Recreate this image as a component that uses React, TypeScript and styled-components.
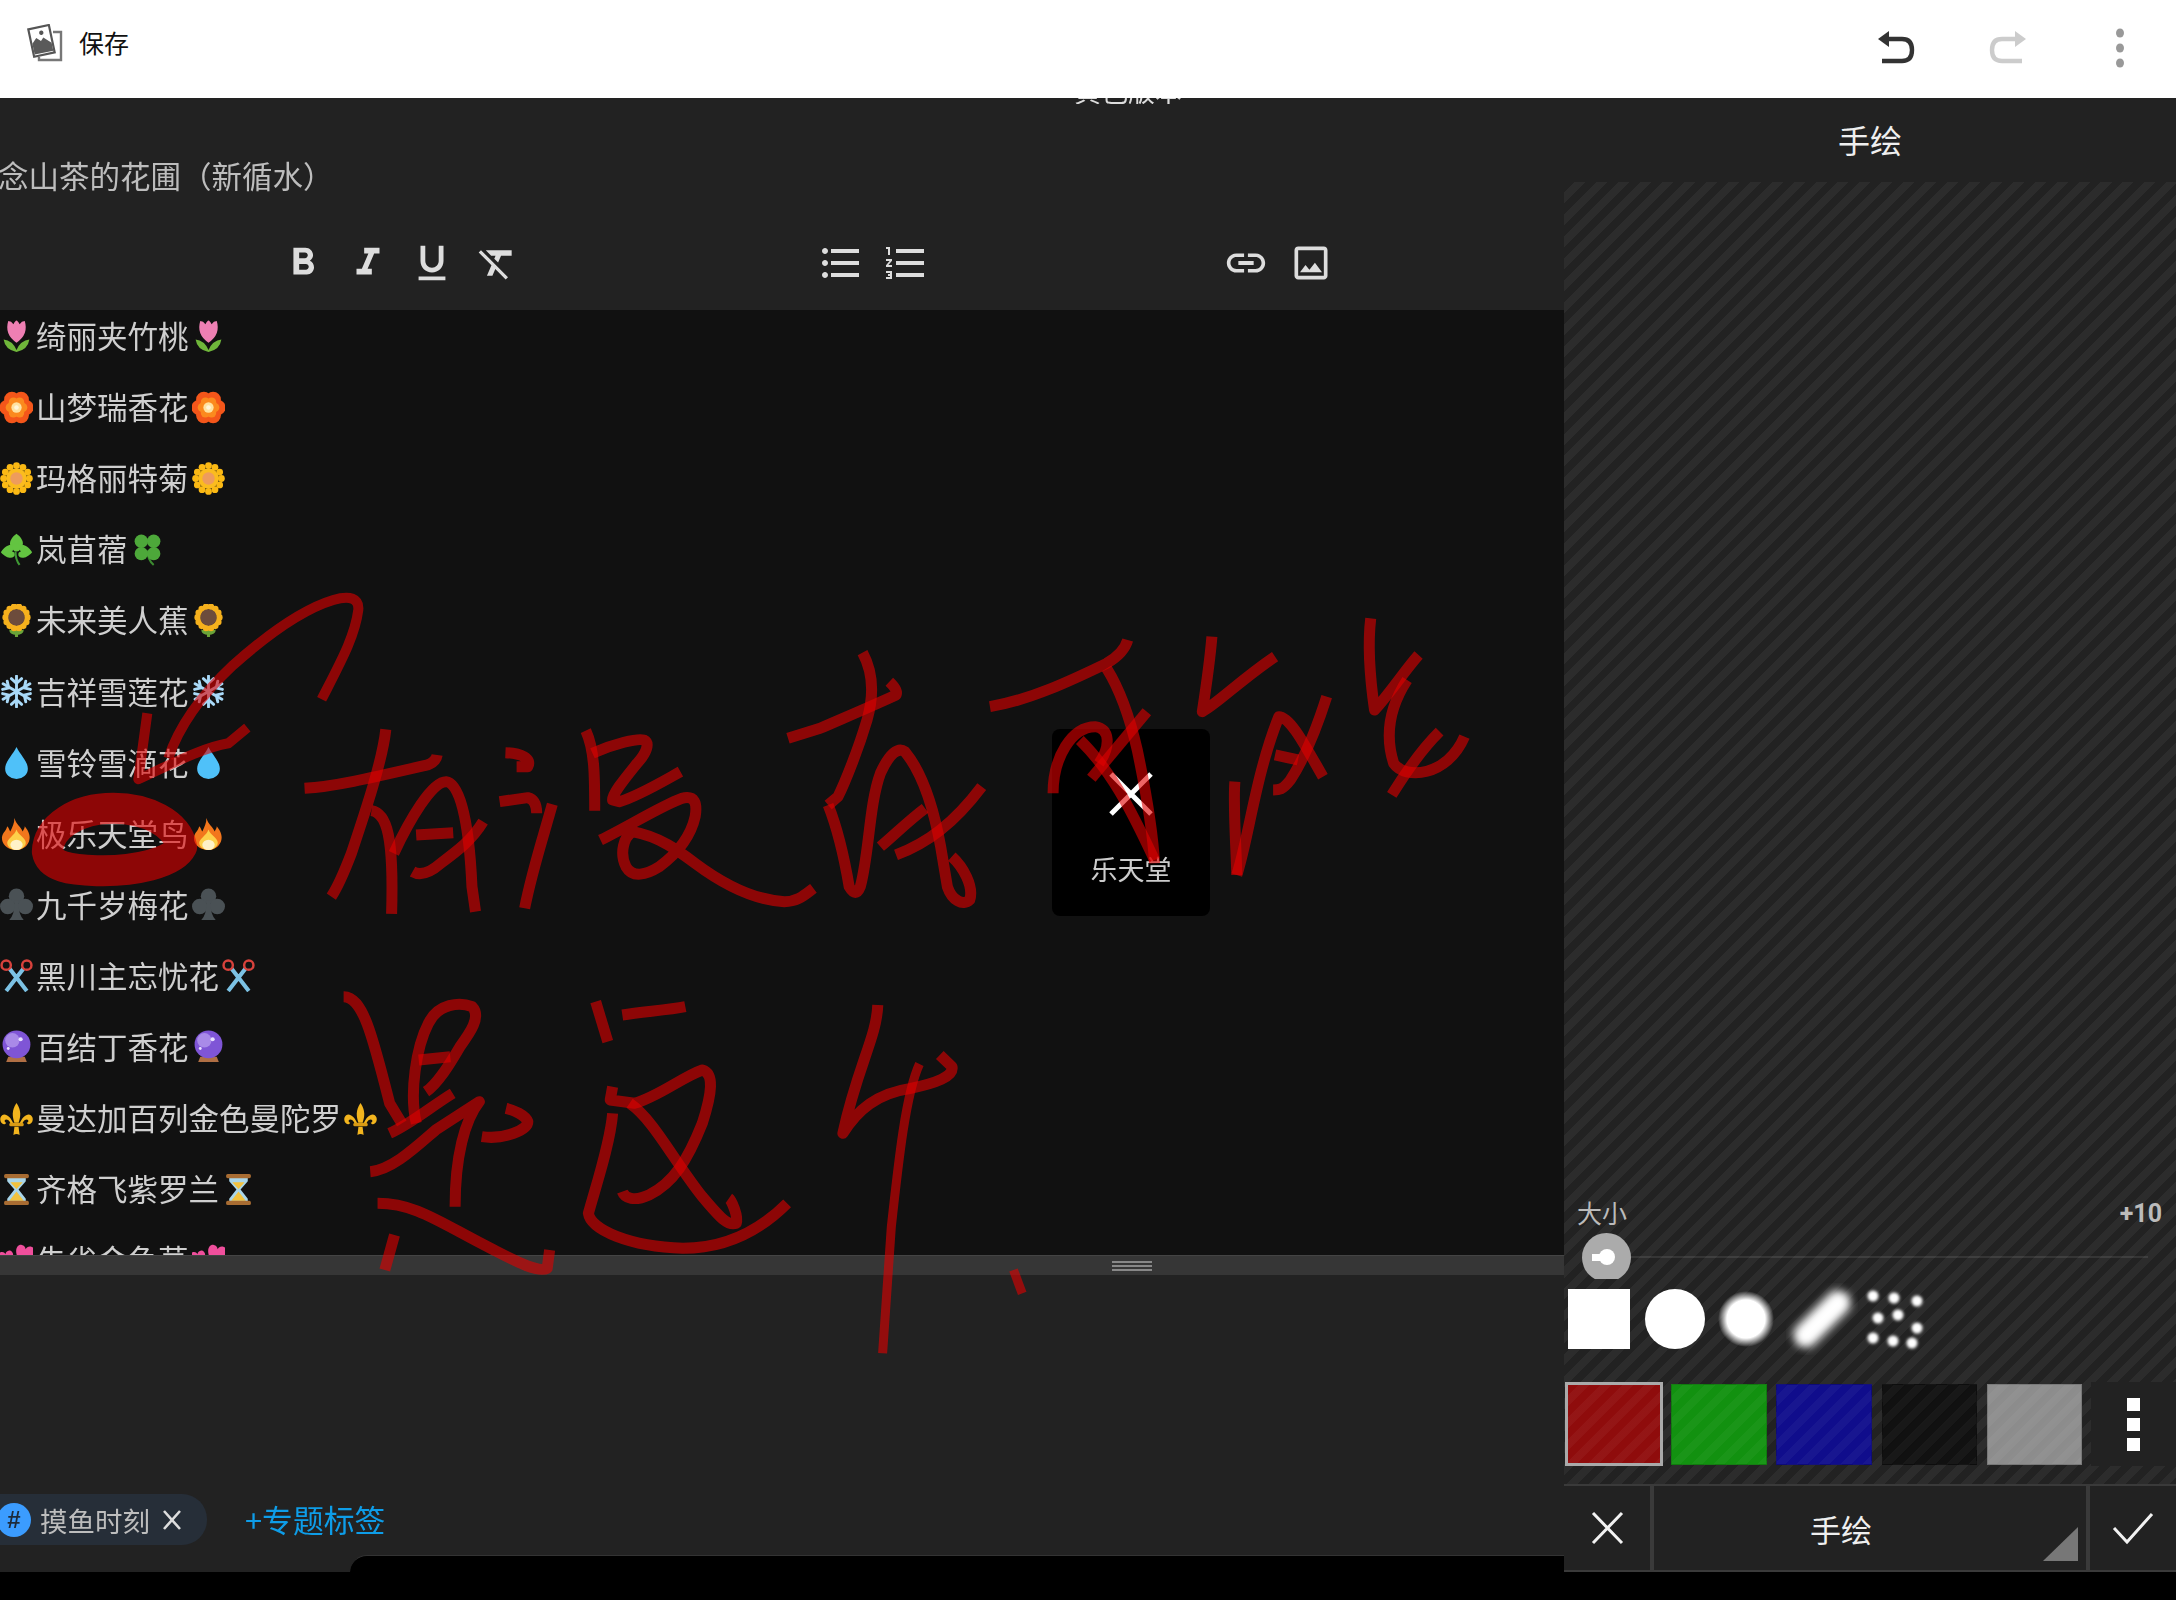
import React from "react";
import styled, { createGlobalStyle } from "styled-components";
import {
  MdFormatBold,
  MdFormatItalic,
  MdFormatUnderlined,
  MdFormatClear,
  MdFormatListBulleted,
  MdFormatListNumbered,
  MdLink,
  MdOutlineImage,
} from "react-icons/md";

const CJK = `"Noto Sans CJK SC", "Noto Sans", sans-serif`;

const Global = createGlobalStyle`
  html, body { margin: 0; padding: 0; background: #000; }
  body { font-family: ${CJK}; }
`;

const Page = styled.div`
  position: relative;
  width: 2176px;
  height: 1600px;
  overflow: hidden;
  background: #000;
  display: flex;
  flex-direction: column;
`;

/* ---------- top white bar ---------- */
const TopBar = styled.header`
  height: 98px;
  flex: none;
  background: #fff;
  display: flex;
  align-items: center;
  justify-content: space-between;
`;
const SaveAction = styled.div`
  display: flex;
  align-items: center;
  gap: 16px;
  padding-left: 27px;
  margin-top: -12px;
`;
const SaveLabel = styled.span`
  font-size: 25px;
  line-height: 34px;
  color: #111;
  margin-top: -2px;
`;
const TopActions = styled.div`
  display: flex;
  margin-top: -2px;
`;
const TopAction = styled.div`
  width: 112px;
  height: 60px;
  display: flex;
  align-items: center;
  justify-content: center;
`;

/* ---------- main split ---------- */
const Main = styled.div`
  height: 1474px;
  flex: none;
  display: flex;
`;
const LeftColumn = styled.section`
  width: 1564px;
  flex: none;
  display: flex;
  flex-direction: column;
`;
const ClippedHeading = styled.div`
  height: 6px;
  flex: none;
  box-sizing: border-box;
  background: #222;
  overflow: hidden;
  display: flex;
  align-items: flex-end;
  justify-content: center;
  padding-left: 692px;
  font-size: 27px;
  line-height: 27px;
  color: #ddd;
  filter: blur(0.6px);
`;
const HeaderBlock = styled.div`
  height: 206px;
  flex: none;
  background: #222;
  display: flex;
  flex-direction: column;
`;
const PostTitle = styled.div`
  margin: 48.5px 0 0 -2px;
  height: 44px;
  font-size: 30.5px;
  line-height: 44px;
  color: #bdbdbd;
  white-space: nowrap;
  filter: blur(0.5px);
`;
const Toolbar = styled.div`
  display: flex;
  align-items: center;
  height: 60px;
  margin-top: 36.5px;
  padding-left: 271px;
  color: #ddd;
  filter: blur(0.5px);
`;
const ToolGroup = styled.div<{ $offset: number; $gap?: number }>`
  display: flex;
  gap: ${(p) => p.$gap ?? 0}px;
  margin-left: ${(p) => p.$offset}px;
`;
const ToolButton = styled.div`
  width: 64.5px;
  height: 60px;
  display: flex;
  align-items: center;
  justify-content: center;
`;
const Editor = styled.div`
  height: 945px;
  flex: none;
  background: #111;
  overflow: hidden;
`;
const FlowerList = styled.div`
  margin-top: -9.5px;
  filter: blur(0.55px);
`;
const FlowerRow = styled.div`
  height: 71.1px;
  display: flex;
  align-items: center;
  gap: 3px;
  font-size: 30.5px;
  line-height: 40px;
  color: #cfcfcf;
`;
const FlowerName = styled.span`
  margin-top: -2px;
`;
const EmojiSvg = styled.svg`
  width: 33px;
  height: 33px;
  flex: none;
`;
const Splitter = styled.div`
  height: 19px;
  flex: none;
  box-sizing: content-box;
  background: #363636;
  border-top: 1px solid #444;
  display: flex;
  align-items: center;
  justify-content: center;
  padding-left: 700px;
`;
const Grip = styled.div`
  width: 40px;
  height: 10px;
  border-top: 2px solid #888;
  border-bottom: 2px solid #888;
  box-sizing: border-box;
  &::after {
    content: "";
    display: block;
    height: 2px;
    margin-top: 2px;
    background: #888;
  }
`;
const Compose = styled.div`
  height: 280px;
  flex: none;
  background: #222;
  box-sizing: border-box;
  display: flex;
  align-items: flex-end;
  gap: 38px;
  padding-bottom: 10px;
`;
const TagChip = styled.div`
  width: 207px;
  height: 51px;
  box-sizing: border-box;
  border-radius: 0 25px 25px 0;
  background: #262e38;
  display: flex;
  align-items: center;
  filter: blur(0.4px);
`;
const HashBadge = styled.span`
  width: 34px;
  height: 34px;
  margin-left: -3px;
  flex: none;
  border-radius: 50%;
  background: #3b9cff;
  color: #1d2a3a;
  font: 700 24px/34px "Liberation Sans", sans-serif;
  text-align: center;
`;
const TagText = styled.span`
  margin-left: 9px;
  font-size: 27.5px;
  line-height: 36px;
  color: #bdbdbd;
  white-space: nowrap;
`;
const TagClose = styled.svg`
  margin-left: 10px;
  width: 24px;
  height: 24px;
  flex: none;
`;
const AddTag = styled.span`
  font-size: 30.8px;
  line-height: 53px;
  color: #0e9de8;
  white-space: nowrap;
  filter: blur(0.4px);
`;
const LeftFooter = styled.div`
  height: 17px;
  flex: none;
  background: #222;
  display: flex;
  justify-content: flex-end;
`;
const FooterNotch = styled.div`
  width: 1214px;
  background: #000;
  border-top: 1px solid #333;
  border-top-left-radius: 28px;
`;

/* ---------- right panel ---------- */
const RightColumn = styled.aside`
  width: 612px;
  flex: none;
  display: flex;
  flex-direction: column;
  background: #222;
`;
const PanelTitle = styled.div`
  height: 84px;
  flex: none;
  box-sizing: border-box;
  display: flex;
  align-items: center;
  justify-content: center;
  font-size: 32px;
  color: #efefef;
  padding-bottom: 3px;
`;
const Canvas = styled.div`
  flex: 1;
  display: flex;
  flex-direction: column;
  justify-content: flex-end;
  padding-bottom: 18px;
  background: repeating-linear-gradient(
    135deg,
    #222 0,
    #222 7.7px,
    #2c2c2c 7.7px,
    #2c2c2c 15.5px
  );
`;
const SizeRow = styled.div`
  display: flex;
  justify-content: space-between;
  align-items: center;
  height: 36px;
  padding: 0 14px 0 13px;
  color: #bbb;
`;
const SizeLabel = styled.span`
  font-size: 25px;
  line-height: 36px;
`;
const SizeValue = styled.span`
  margin-top: 3px;
  font: 700 25px/36px Roboto, "Liberation Sans", sans-serif;
`;
const SliderRow = styled.div`
  position: relative;
  height: 46px;
  margin-top: 3px;
`;
const SliderTrack = styled.div`
  position: absolute;
  left: 38px;
  width: 546px;
  top: 23px;
  height: 2px;
  background: rgba(255, 255, 255, 0.09);
`;
const SliderThumb = styled.div`
  position: absolute;
  left: 18px;
  top: 0;
  width: 49px;
  height: 46px;
  overflow: hidden;
`;
const ThumbDisc = styled.div`
  width: 49px;
  height: 49px;
  border-radius: 50%;
  background: #ababab;
  position: relative;
`;
const ThumbDot = styled.div`
  position: absolute;
  left: 17px;
  top: 16px;
  width: 16px;
  height: 16px;
  border-radius: 50%;
  background: #fff;
  &::before {
    content: "";
    position: absolute;
    left: -7px;
    top: 5px;
    width: 10px;
    height: 7px;
    background: #fff;
  }
`;
const BrushRow = styled.div`
  display: flex;
  align-items: center;
  height: 60px;
  margin-top: 10px;
  padding-left: 4px;
`;
const SquareBrush = styled.div`
  width: 62px;
  height: 60px;
  background: #fff;
`;
const RoundBrush = styled.div`
  width: 60px;
  height: 60px;
  margin-left: 15px;
  border-radius: 50%;
  background: #fff;
`;
const SoftBrush = styled.div`
  width: 56px;
  height: 56px;
  margin-left: 13px;
  border-radius: 50%;
  background: radial-gradient(circle closest-side, #fff 0, #fff 68%, rgba(255, 255, 255, 0) 100%);
`;
const BrushSvg = styled.svg`
  flex: none;
  width: 72px;
  height: 72px;
  margin-left: 12px;
`;
const DotsSvg = styled.svg`
  flex: none;
  width: 62px;
  height: 66px;
  margin-left: 7px;
`;
const SwatchRow = styled.div`
  display: flex;
  align-items: stretch;
  height: 84px;
  margin-top: 33px;
  padding-left: 1px;
`;
const Swatch = styled.div<{ $color: string; $selected?: boolean }>`
  width: ${(p) => (p.$selected ? 98 : 95.5)}px;
  margin-right: ${(p) => (p.$selected ? 8 : 9.8)}px;
  margin-top: ${(p) => (p.$selected ? 0 : 2)}px;
  margin-bottom: ${(p) => (p.$selected ? 0 : 1)}px;
  box-sizing: border-box;
  border: ${(p) => (p.$selected ? "3px solid #aaa" : "1px solid rgba(0,0,0,.15)")};
  background:
    repeating-linear-gradient(
      135deg,
      rgba(255, 255, 255, 0) 0,
      rgba(255, 255, 255, 0) 7.7px,
      rgba(255, 255, 255, 0.035) 7.7px,
      rgba(255, 255, 255, 0.035) 15.5px
    ),
    ${(p) => p.$color};
`;
const MoreSwatch = styled.div`
  flex: 1;
  margin-left: -1px;
  background: #222;
  display: flex;
  flex-direction: column;
  align-items: center;
  justify-content: center;
  gap: 7px;
`;
const MoreDot = styled.div`
  width: 13px;
  height: 13px;
  background: #fff;
`;
const ActionBar = styled.div`
  height: 88px;
  flex: none;
  box-sizing: border-box;
  display: flex;
  align-items: stretch;
  background: #222;
  border-top: 2px solid #3a3a3a;
  border-bottom: 2px solid #3a3a3a;
`;
const BarButton = styled.div`
  width: 86px;
  flex: none;
  display: flex;
  align-items: center;
  justify-content: center;
`;
const BarCenter = styled.div`
  flex: 1;
  position: relative;
  display: flex;
  align-items: center;
  justify-content: center;
  padding-right: 58px;
  border-left: 4px solid #3a3a3a;
  border-right: 4px solid #3a3a3a;
  font-size: 31px;
  color: #efefef;
`;
const Corner = styled.div`
  position: absolute;
  right: 8px;
  bottom: 9px;
  width: 35px;
  height: 34px;
  background: #777;
  clip-path: polygon(100% 0, 100% 100%, 0 100%);
`;

/* ---------- overlays ---------- */
const Toast = styled.div`
  position: absolute;
  left: 1052px;
  top: 729px;
  width: 158px;
  height: 187px;
  box-sizing: border-box;
  border-radius: 8px;
  background: #000;
  display: flex;
  flex-direction: column;
  align-items: center;
  padding-top: 42px;
`;
const ToastText = styled.div`
  margin-top: 34px;
  font-size: 27px;
  line-height: 36px;
  color: #ccc;
  filter: blur(0.4px);
`;
const InkLayer = styled.svg`
  position: absolute;
  left: 0;
  top: 0;
  width: 1564px;
  height: 1400px;
  pointer-events: none;
`;
const Ink = styled.path<{ $w?: number }>`
  fill: none;
  stroke: rgb(225, 0, 0);
  stroke-opacity: 0.6;
  stroke-width: ${(p) => p.$w ?? 10}px;
  stroke-linecap: butt;
  stroke-linejoin: round;
  vector-effect: non-scaling-stroke;
`;

/* ---------- data ---------- */
type EmojiName =
  | "tulip" | "blossom" | "daisy" | "shamrock" | "clover" | "sunflower" | "snow"
  | "drop" | "fire" | "club" | "scissors" | "ball" | "lis" | "glass" | "hearts";

const ring = (n: number, r: number, size: number, fill: string, cx = 16, cy = 16) =>
  Array.from({ length: n }, (_, i) => {
    const a = (i / n) * Math.PI * 2;
    return <circle key={i} cx={cx + Math.cos(a) * r} cy={cy + Math.sin(a) * r} r={size} fill={fill} />;
  });

const heart = (x: number, y: number, s: number, fill: string, rot = 0) => (
  <path
    transform={`translate(${x} ${y}) rotate(${rot}) scale(${s})`}
    d="M0 6 C-7 1 -6 -5 -2.6 -5 C-1.2 -5 -.4 -4.2 0 -3 C.4 -4.2 1.2 -5 2.6 -5 C6 -5 7 1 0 6Z"
    fill={fill}
  />
);

const emojiArt: Record<EmojiName, React.ReactNode> = {
  tulip: (
    <>
      <path d="M16 31 Q5 29 3.5 19 Q12 20 16 29 Q20 20 28.5 19 Q27 29 16 31Z" fill="#6fb63a" />
      <path d="M8 1 Q11 1 13 4 Q15 .5 16 .5 Q17 .5 19 4 Q21 1 24 1 Q28 14 16 22 Q4 14 8 1Z" fill="#ee7fb3" />
    </>
  ),
  blossom: (
    <>
      {ring(6, 9, 7.5, "#f4561a")}
      {ring(6, 6, 4.5, "#fb8a1e")}
      <circle cx="16" cy="16" r="5" fill="#ffe2a0" />
      <circle cx="16" cy="16" r="2.2" fill="#fff6da" />
    </>
  ),
  daisy: (
    <>
      {ring(12, 12.5, 3.3, "#fbb914")}
      <circle cx="16" cy="16" r="10" fill="#fbbc1e" />
      <circle cx="16" cy="16" r="6" fill="#ee9c5c" />
    </>
  ),
  shamrock: (
    <>
      <path d="M15 18 Q15 26 19 31" stroke="#3f9a35" strokeWidth="2" fill="none" />
      {heart(16, 8, 1.2, "#63c441", 180)}
      {heart(8, 18, 1.2, "#63c441", 85)}
      {heart(24, 18, 1.2, "#63c441", -85)}
      <circle cx="16" cy="14" r="4" fill="#63c441" />
    </>
  ),
  clover: (
    <>
      <path d="M16 17 Q16 26 22 31" stroke="#3c8a30" strokeWidth="2" fill="none" />
      <circle cx="10" cy="8" r="6.5" fill="#4da83a" />
      <circle cx="22" cy="8" r="6.5" fill="#4da83a" />
      <circle cx="10" cy="20" r="6.5" fill="#4da83a" />
      <circle cx="22" cy="20" r="6.5" fill="#4da83a" />
    </>
  ),
  sunflower: (
    <>
      <path d="M16 24 V32" stroke="#6aa338" strokeWidth="3" />
      <path d="M16 30 Q9 30 9 25 Q14 25 16 28 Q18 25 23 25 Q23 30 16 30Z" fill="#6aa338" />
      {ring(14, 10.5, 3.2, "#f6b11d", 16, 13)}
      <circle cx="16" cy="13" r="8" fill="#6d4c3c" />
    </>
  ),
  snow: (
    <g stroke="#a9d9f8" strokeWidth="2.8" fill="none" strokeLinecap="round">
      <path d="M16 1 V31 M3 8.5 L29 23.5 M3 23.5 L29 8.5" />
      <path d="M11 3.5 L16 8 L21 3.5 M11 28.5 L16 24 L21 28.5 M2.5 14 L8.5 12.5 L7 6 M29.5 14 L23.5 12.5 L25 6 M2.5 18 L8.5 19.5 L7 26 M29.5 18 L23.5 19.5 L25 26" />
    </g>
  ),
  drop: <path d="M16 1 C20 9 27 15 27 22 A11 10 0 0 1 5 22 C5 15 12 9 16 1Z" fill="#4fc1f9" />,
  fire: (
    <>
      <path d="M14 1 C16 8 20 9 22 14 C23 12 24 11 24 9 C28 14 30 19 28 24 C26 29 21 32 16 32 C9 32 3 28 2 22 C1 16 6 14 7 9 C9 11 9 13 10 14 C12 10 14 6 14 1Z" fill="#f2761c" />
      <path d="M16 12 C18 18 25 20 25 25 C25 29 20 32 16 32 C11 32 7 29 7 25 C7 21 14 18 16 12Z" fill="#fdd04a" />
      <ellipse cx="16" cy="27" rx="6" ry="5" fill="#fff2c8" />
    </>
  ),
  club: (
    <>
      <circle cx="16" cy="8" r="7.5" fill="#4a5155" />
      <circle cx="7.5" cy="18" r="7.5" fill="#4a5155" />
      <circle cx="24.5" cy="18" r="7.5" fill="#4a5155" />
      <path d="M14.5 12 H17.5 Q18 26 23 31 H9 Q14 26 14.5 12Z" fill="#4a5155" />
    </>
  ),
  scissors: (
    <>
      <path d="M9 9 L26 31 M23 9 L6 31" stroke="#7cc2e4" strokeWidth="4" fill="none" />
      <circle cx="6" cy="6" r="4.5" fill="none" stroke="#d8423c" strokeWidth="2.4" />
      <circle cx="26" cy="6" r="4.5" fill="none" stroke="#d8423c" strokeWidth="2.4" />
    </>
  ),
  ball: (
    <>
      <path d="M8 26 H24 L26 31 H6Z" fill="#b06f44" />
      <circle cx="16" cy="14" r="13.5" fill="#7f55d6" />
      <circle cx="12" cy="10" r="7" fill="#a98ae8" />
      <circle cx="20" cy="9" r="2" fill="#e8e0ff" />
      <circle cx="8" cy="18" r="1.4" fill="#e8e0ff" />
    </>
  ),
  lis: (
    <>
      <path d="M16 1 C21 8 20 15 18 20 H14 C12 15 11 8 16 1Z" fill="#f3b51e" />
      <path d="M13 21 C10 13 3 9 0.5 15 C-1 20 4 24 6 20 C4 20 4 17 6 17 C9 17 10 20 11 23Z" fill="#f3b51e" />
      <path d="M19 21 C22 13 29 9 31.5 15 C33 20 28 24 26 20 C28 20 28 17 26 17 C23 17 22 20 21 23Z" fill="#f3b51e" />
      <rect x="9" y="20" width="14" height="3.5" rx="1.5" fill="#d89a14" />
      <path d="M14 24 H18 L19 32 Q16 30 13 32Z" fill="#f3b51e" />
    </>
  ),
  glass: (
    <>
      <path d="M7 4 H25 V8 L18 16 L25 25 V28 H7 V25 L14 16 L7 8Z" fill="#a9d6ea" />
      <path d="M10 9 H22 L16 15.5Z M16 18 L23 27 H9Z" fill="#f2c23e" />
      <rect x="4" y="1" width="24" height="4" rx="1.5" fill="#a86c32" />
      <rect x="4" y="27" width="24" height="4" rx="1.5" fill="#a86c32" />
    </>
  ),
  hearts: (
    <>
      {heart(6, 14, 1.4, "#ef4f9c", -10)}
      {heart(24, 10, 1.7, "#ef4f9c", 10)}
    </>
  ),
};

const Emoji = ({ name }: { name: EmojiName }) => (
  <EmojiSvg viewBox="0 0 32 32">{emojiArt[name]}</EmojiSvg>
);

const flowers: { l: EmojiName; r?: EmojiName; t: string }[] = [
  { l: "tulip", t: "绮丽夹竹桃" },
  { l: "blossom", t: "山梦瑞香花" },
  { l: "daisy", t: "玛格丽特菊" },
  { l: "shamrock", r: "clover", t: "岚苜蓿" },
  { l: "sunflower", t: "未来美人蕉" },
  { l: "snow", t: "吉祥雪莲花" },
  { l: "drop", t: "雪铃雪滴花" },
  { l: "fire", t: "极乐天堂鸟" },
  { l: "club", t: "九千岁梅花" },
  { l: "scissors", t: "黑川主忘忧花" },
  { l: "ball", t: "百结丁香花" },
  { l: "lis", t: "曼达加百列金色曼陀罗" },
  { l: "glass", t: "齐格飞紫罗兰" },
  { l: "hearts", t: "朱雀金鱼草" },
];

const inkGroups: { t: string; w?: number; p: string[] }[] = [
  {
    t: "translate(0 300) scale(.3333)",
    w: 10,
    p: [
      "M505 1375 C540 1270 620 1170 700 1095 C790 1015 900 930 1000 900 C1050 885 1078 895 1075 930 C1065 1010 1020 1090 965 1198",
      "M442 1240 L415 1438 C500 1400 600 1345 685 1330 L742 1283",
    ],
  },
  {
    t: "translate(0 780) scale(.3333)",
    w: 31,
    p: ["M142 215 C145 140 230 85 340 85 C440 85 530 130 545 200 C520 250 400 275 290 272 C210 270 150 260 142 215 Z"],
  },
  {
    t: "translate(280 570) scale(.4464 .3333)",
    w: 11,
    p: [
      "M55 655 C120 650 200 625 330 585 Q350 575 352 555",
      "M237 478 C230 570 190 730 160 850 C140 920 130 950 115 980",
      "M205 722 C240 730 255 800 250 1032",
      "M255 850 C290 750 340 635 372 635 C410 640 425 800 430 950 L438 1025",
      "M305 795 L388 788",
      "M455 755 C430 810 400 840 360 880 C330 915 310 915 297 905",
      "M505 548 C540 550 565 565 555 590 L530 590",
      "M492 695 L555 683 Q575 690 575 730",
      "M610 703 C590 800 565 900 548 1015",
      "M685 482 C705 540 705 620 705 722",
      "M700 550 C750 520 800 505 815 510 C830 520 820 550 800 580 C770 630 745 670 745 690 L760 695 C800 680 850 640 897 605",
      "M718 810 C780 770 850 710 900 685 C930 675 935 700 930 740 C920 800 890 850 850 890 C820 915 790 925 775 890 C760 850 770 800 790 785 C850 800 890 840 930 880 C990 940 1060 990 1130 995 C1160 995 1175 975 1195 955",
      "M1138 505 L1210 475 C1270 440 1340 400 1380 375 Q1385 360 1365 335",
      "M1305 248 C1330 310 1330 380 1315 450 C1295 540 1265 640 1250 680 L1228 705",
      "M1228 705 C1250 780 1265 870 1275 950 Q1290 985 1300 950 C1320 850 1320 700 1345 610 C1365 550 1385 530 1400 545 C1440 610 1465 720 1480 830 L1495 950 C1505 990 1530 1010 1545 990 C1555 950 1530 890 1505 860",
      "M1345 830 C1380 790 1410 750 1445 715",
      "M1380 855 C1450 820 1510 760 1572 650",
    ],
  },
  {
    t: "translate(900 600) scale(.3827 .3333)",
    w: 11,
    p: [
      "M235 320 C340 300 450 240 540 190 Q585 160 595 120",
      "M540 205 C570 260 600 350 620 450 C640 560 660 680 665 790",
      "M470 420 C550 510 600 620 665 780",
      "M400 580 C400 470 450 380 510 380 C550 385 550 440 520 490",
      "M500 535 L645 335",
      "M815 110 C810 180 800 260 790 335 C830 310 890 240 980 170",
      "M875 545 C870 620 880 780 880 825",
      "M880 825 C910 720 930 520 990 350 C1020 350 1060 440 1105 530",
      "M1115 290 C1090 380 1060 470 1020 540 C1000 570 990 570 975 570",
      "M980 465 L1040 480",
      "M1230 55 C1220 150 1230 250 1240 330 C1280 280 1320 210 1355 165",
      "M1325 240 C1280 320 1265 400 1290 490 C1320 540 1430 530 1475 410",
      "M1410 395 C1370 440 1320 520 1285 585",
    ],
  },
  {
    t: "translate(300 960) scale(.4847 .3333)",
    w: 11,
    p: [
      "M90 110 C130 110 150 230 185 430 L210 490",
      "M240 490 C225 400 240 260 265 190 C285 130 330 125 355 140 C375 170 350 220 330 260 C310 310 285 370 260 395",
      "M245 300 L310 290",
      "M185 520 C230 490 270 440 315 400",
      "M145 635 C190 630 240 560 280 510 L370 425 C340 480 320 590 320 740",
      "M375 530 C420 540 470 510 470 485 C465 465 440 450 425 445",
      "M160 730 C240 730 290 790 400 870 C440 900 490 940 510 925 L515 870",
      "M195 825 L175 930",
      "M610 125 L635 245",
      "M665 165 C710 155 760 150 795 140",
      "M645 380 L640 420 L690 430 C740 410 790 350 830 330 C855 340 850 400 830 490 C800 600 770 670 720 705 C690 725 670 715 665 695",
      "M680 430 C730 480 770 600 830 710 C860 760 880 800 900 790 C905 770 890 720 885 715",
      "M645 460 C640 550 610 680 595 760 C600 810 680 860 790 865 C880 865 950 810 1005 730",
      "M1192 135 C1190 230 1150 320 1120 520 C1150 450 1190 400 1260 385 C1310 370 1350 350 1345 320 L1320 285",
    ],
  },
  {
    t: "translate(300 960) scale(.4847 .3333)",
    w: 9,
    p: ["M1278 312 C1250 400 1235 600 1220 800 L1202 1180", "M1472 930 L1490 1000"],
  },
];

const UndoIcon = ({ color, flip }: { color: string; flip?: boolean }) => (
  <svg width="40" height="36" viewBox="0 0 40 36" style={flip ? { transform: "scaleX(-1)" } : undefined}>
    <path d="M2 9 L13 1 V17 Z" fill={color} />
    <path d="M11 9 H26 Q36 9 36 20 Q36 31 26 31 H6" fill="none" stroke={color} strokeWidth="4.4" />
  </svg>
);

const PhotoIcon = () => (
  <svg width="36" height="38" viewBox="0 0 36 38">
    <path d="M26 8 H34 V36 H12 V33" fill="none" stroke="#777" strokeWidth="2.4" />
    <g transform="rotate(-12 14 17)">
      <rect x="4" y="3" width="21" height="28" fill="#fff" stroke="#555" strokeWidth="2.2" />
      <path d="M5 29 V18 L10 13 L14 17 L17 14 L24 21 V29 Z" fill="#5a5a5a" />
      <circle cx="16" cy="9" r="2.2" fill="#555" />
    </g>
  </svg>
);

export default function App() {
  return (
    <Page>
      <Global />
      <TopBar>
        <SaveAction>
          <PhotoIcon />
          <SaveLabel>保存</SaveLabel>
        </SaveAction>
        <TopActions>
          <TopAction><UndoIcon color="#333" /></TopAction>
          <TopAction><UndoIcon color="#ccc" flip /></TopAction>
          <TopAction>
            <svg width="10" height="40" viewBox="0 0 10 40">
              <ellipse cx="5" cy="5" rx="4" ry="4.5" fill="#999" />
              <ellipse cx="5" cy="20" rx="4" ry="4.5" fill="#999" />
              <ellipse cx="5" cy="35" rx="4" ry="4.5" fill="#999" />
            </svg>
          </TopAction>
        </TopActions>
      </TopBar>

      <Main>
        <LeftColumn>
          <ClippedHeading>黄色版本</ClippedHeading>
          <HeaderBlock>
            <PostTitle>念山茶的花圃（新循水）</PostTitle>
            <Toolbar>
              <ToolGroup $offset={0}>
                <ToolButton><MdFormatBold size={46} /></ToolButton>
                <ToolButton><MdFormatItalic size={46} /></ToolButton>
                <ToolButton><MdFormatUnderlined size={46} /></ToolButton>
                <ToolButton><MdFormatClear size={44} /></ToolButton>
              </ToolGroup>
              <ToolGroup $offset={280}>
                <ToolButton><MdFormatListBulleted size={48} /></ToolButton>
                <ToolButton><MdFormatListNumbered size={48} /></ToolButton>
              </ToolGroup>
              <ToolGroup $offset={276} $gap={-3}>
                <ToolButton><MdLink size={46} /></ToolButton>
                <ToolButton><MdOutlineImage size={44} /></ToolButton>
              </ToolGroup>
            </Toolbar>
          </HeaderBlock>
          <Editor>
            <FlowerList>
              {flowers.map((f) => (
                <FlowerRow key={f.t}>
                  <Emoji name={f.l} />
                  <FlowerName>{f.t}</FlowerName>
                  <Emoji name={f.r ?? f.l} />
                </FlowerRow>
              ))}
            </FlowerList>
          </Editor>
          <Splitter><Grip /></Splitter>
          <Compose>
            <TagChip>
              <HashBadge>#</HashBadge>
              <TagText>摸鱼时刻</TagText>
              <TagClose viewBox="0 0 24 24">
                <path d="M4 3 L20 21 M20 3 L4 21" stroke="#ddd" strokeWidth="2.6" fill="none" />
              </TagClose>
            </TagChip>
            <AddTag>+专题标签</AddTag>
          </Compose>
          <LeftFooter><FooterNotch /></LeftFooter>
        </LeftColumn>

        <RightColumn>
          <PanelTitle>手绘</PanelTitle>
          <Canvas>
            <SizeRow>
              <SizeLabel>大小</SizeLabel>
              <SizeValue>+10</SizeValue>
            </SizeRow>
            <SliderRow>
              <SliderTrack />
              <SliderThumb><ThumbDisc><ThumbDot /></ThumbDisc></SliderThumb>
            </SliderRow>
            <BrushRow>
              <SquareBrush />
              <RoundBrush />
              <SoftBrush />
              <BrushSvg viewBox="0 0 72 72">
                <defs>
                  <filter id="soft" filterUnits="userSpaceOnUse" x="0" y="0" width="72" height="72">
                    <feGaussianBlur stdDeviation="4.5" />
                  </filter>
                </defs>
                <line x1="20" y1="52" x2="52" y2="20" stroke="#fff" strokeWidth="25" strokeLinecap="round" filter="url(#soft)" />
              </BrushSvg>
              <DotsSvg viewBox="0 0 62 66">
                <defs>
                  <filter id="softdot" filterUnits="userSpaceOnUse" x="0" y="0" width="62" height="66">
                    <feGaussianBlur stdDeviation="1.6" />
                  </filter>
                </defs>
                <g filter="url(#softdot)">
                  {[[8,10],[29,12],[52,15],[13,32],[33,29],[52,42],[8,52],[28,55],[47,57]].map(([x, y]) => (
                    <circle key={`${x}-${y}`} cx={x} cy={y} r="5.5" fill="#fff" />
                  ))}
                </g>
              </DotsSvg>
            </BrushRow>
            <SwatchRow>
              <Swatch $selected $color="rgba(150,12,12,.95)" />
              <Swatch $color="rgba(18,150,16,.96)" />
              <Swatch $color="rgba(16,12,145,.96)" />
              <Swatch $color="rgba(14,14,14,.9)" />
              <Swatch $color="rgba(146,146,146,.95)" />
              <MoreSwatch><MoreDot /><MoreDot /><MoreDot /></MoreSwatch>
            </SwatchRow>
          </Canvas>
          <ActionBar>
            <BarButton>
              <svg width="36" height="36" viewBox="0 0 36 36">
                <path d="M4 3 L33 33 M33 3 L4 33" stroke="#f2f2f2" strokeWidth="3" fill="none" />
              </svg>
            </BarButton>
            <BarCenter>
              手绘
              <Corner />
            </BarCenter>
            <BarButton>
              <svg width="44" height="34" viewBox="0 0 44 34">
                <path d="M3 17 L16 31 L41 3" stroke="#f2f2f2" strokeWidth="3" fill="none" />
              </svg>
            </BarButton>
          </ActionBar>
        </RightColumn>
      </Main>

      <Toast>
        <svg width="46" height="46" viewBox="0 0 46 46">
          <path d="M3 3 L43 43 M43 3 L3 43" stroke="#fff" strokeWidth="5" fill="none" />
        </svg>
        <ToastText>乐天堂</ToastText>
      </Toast>

      <InkLayer viewBox="0 0 1564 1400">
        {inkGroups.map((g, i) => (
          <g key={i} transform={g.t}>
            {g.p.map((d, j) => (
              <Ink key={j} d={d} $w={g.w} />
            ))}
          </g>
        ))}
      </InkLayer>
    </Page>
  );
}
